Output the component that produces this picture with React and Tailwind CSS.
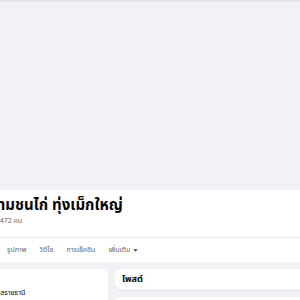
export default function App() {
  return (
    <div
      className="relative w-[300px] h-[300px] overflow-hidden bg-[#f0f2f5] text-[#050505]"
      style={{ fontFamily: '"Noto Sans Thai", "Noto Sans", "DejaVu Sans", sans-serif' }}
    >
      <div className="h-[2px] bg-gradient-to-b from-[#dcdee3] to-[#eceef2]" />
      <div className="h-[188px]" />
      <div className="bg-white h-[72px] flex flex-col">
        <div className="h-[47px] pt-[6px] overflow-hidden whitespace-nowrap">
          <div className="-ml-[20px] text-[15px] font-bold leading-[20px]">
            สนามชนไก่ ทุ่งเม็กใหญ่
          </div>
          <div className="-ml-[27px] text-[7px] leading-[10px] text-[#65676b]">
            ผู้ติดตาม 472 คน
          </div>
        </div>
        <div className="h-px bg-[#e4e6eb]" />
        <div className="flex items-center gap-[13px] pl-[7px] h-[24px] text-[7px] text-[#65676b] whitespace-nowrap">
          <span>รูปภาพ</span>
          <span>วิดีโอ</span>
          <span>การเช็คอิน</span>
          <span className="flex items-center gap-[3px]">
            เพิ่มเติม
            <svg width="5" height="3" viewBox="0 0 6 4">
              <path d="M0 0 L6 0 L3 4 Z" fill="#65676b" />
            </svg>
          </span>
        </div>
      </div>
      <div className="flex gap-[7px] pt-[7px]">
        <div className="w-[108px] h-[60px] bg-white rounded-r-[6px] shadow-[0_1px_1px_rgba(0,0,0,0.08)] overflow-hidden whitespace-nowrap">
          <div className="mt-[19px] -ml-[8px] text-[7px] text-[#050505]">อุบลราชธานี</div>
        </div>
        <div className="flex-1 flex flex-col gap-[7px]">
          <div className="h-[21px] bg-white rounded-l-[6px] shadow-[0_1px_1px_rgba(0,0,0,0.08)] flex items-center pl-[7px]">
            <span className="text-[9px] font-bold">โพสต์</span>
          </div>
          <div className="h-[40px] bg-white rounded-l-[6px]" />
        </div>
      </div>
    </div>
  );
}
